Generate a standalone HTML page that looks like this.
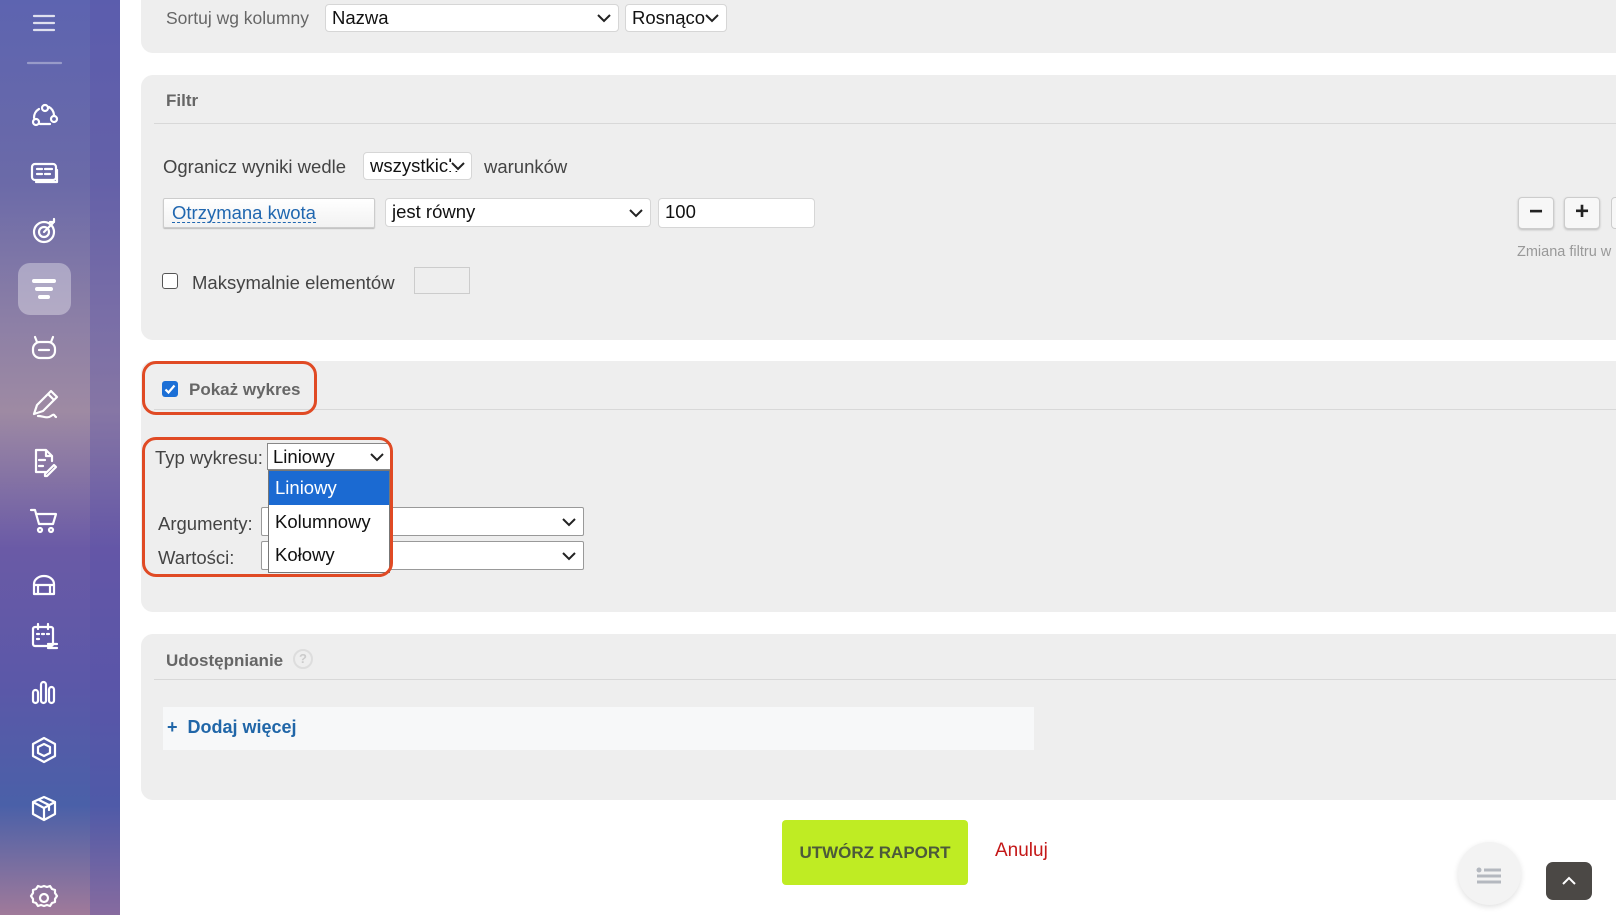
<!DOCTYPE html>
<html><head><meta charset="utf-8"><style>
*{box-sizing:border-box;margin:0;padding:0}
body{width:1616px;height:915px;overflow:hidden;background:#fff;font-family:"Liberation Sans","DejaVu Sans",sans-serif;color:#333;position:relative}
.sb{position:absolute;left:0;top:0;width:120px;height:915px;background:linear-gradient(180deg,#5d64b0 0%,#6b6aa8 20%,#8c7fa6 35%,#9e8aa3 45%,#6a5aa6 60%,#5b58a8 75%,#4a60a8 88%,#a07a9a 100%)}
.sb2{position:absolute;left:90px;top:0;width:30px;height:915px;background:rgba(90,80,170,.35)}
.t{position:absolute;font-size:18.5px;white-space:nowrap}
.sel{position:absolute;background:#fff;border:1px solid #d6d6d6;border-radius:4px;font-size:18.5px;color:#111;padding:2px 6px;white-space:nowrap}
.sel svg{position:absolute;right:7px;top:50%;margin-top:-4px}
.red{position:absolute;border:3px solid #e04a24;border-radius:14px}
.hr{position:absolute;height:1px;background:#d8d8d8}
.panel{position:absolute;left:141px;width:1500px;background:#eee;border-radius:12px}
</style></head><body>
<div class="sb"></div><div class="sb2"></div>
<svg style="position:absolute;left:0;top:0" width="120" height="915" fill="none" stroke="#fff" stroke-width="2.2" stroke-linecap="round" stroke-linejoin="round">
<path d="M34 16h20M34 23h20M34 30h20" stroke-opacity=".8"/>
<path d="M28 63h33" stroke-opacity=".35"/>
<circle cx="45" cy="108" r="3"/><circle cx="36" cy="122" r="3"/><circle cx="54" cy="119" r="3"/><path d="M39 109a10 10 0 0 0-5 9M49 107a10 10 0 0 1 5 8M40 124h10"/>
<rect x="32" y="164" width="24" height="16" rx="3"/><path d="M36 182h21v-12M37 169h5M37 174h5M45 169h7M45 174h5"/>
<circle cx="44" cy="232" r="10"/><circle cx="44" cy="232" r="5"/><path d="M44 232l9-9M50 222h4v-3"/>
<rect x="18" y="263" width="53" height="52" rx="12" fill="#fff" fill-opacity=".35" stroke="none"/>
<path d="M34 281h20M37 289h14M40 297h8" stroke-width="4"/>
<rect x="33" y="342" width="22" height="16" rx="7"/><path d="M37 342l-2-5M51 342l2-5M39 350h10"/>
<path d="M34 414l3-9 14-14 6 6-14 14zM48 394l6 6M38 416c5 0 9 3 13 0s3 0 5 1"/>
<path d="M47 472h-11v-22h10l6 6v5M46 450v6h6M39 460h6M39 466h4M45 474l9-9 2 2-9 9h-2z"/>
<path d="M31 510h4l4 14h14l3-10H36"/><circle cx="40" cy="530" r="2"/><circle cx="51" cy="530" r="2"/>
<path d="M34 594v-10a10 8 0 0 1 20 0v10zM34 585h20M38 585v9M50 585v9"/>
<rect x="33" y="627" width="20" height="19" rx="2"/><path d="M38 624v5M48 624v5M37 634h2M42 634h2M47 634h2M37 639h2M48 644h9M48 648h9"/>
<rect x="33" y="690" width="5" height="13" rx="2.5"/><rect x="41" y="682" width="5" height="21" rx="2.5"/><rect x="49" y="687" width="5" height="16" rx="2.5"/>
<path d="M44 738l11 6v12l-11 6-11-6v-12z"/><path d="M44 744l6 3v6l-6 3-6-3v-6z"/>
<path d="M44 797l11 5v12l-11 6-11-6v-12zM33 802l11 6 11-6M44 808v12M39 800l10 5v5"/>
<circle cx="44" cy="898" r="4"/><path d="M44 886l3 1 3-1 2 3 3 1 0 3 2 3-2 3 0 3-3 1-2 3-3-1-3 1-3-1-3 1-2-3-3-1 0-3-2-3 2-3 0-3 3-1 2-3 3 1z"/>
</svg>

<div class="panel" style="top:-20px;height:73px"></div>
<div class="t" style="left:166px;top:8px;color:#666;font-size:17.5px">Sortuj wg kolumny</div>
<div class="sel" style="left:325px;top:4px;width:294px;height:28px">Nazwa<svg width="14" height="9"><path d="M1 1l6 6 6-6" stroke="#222" stroke-width="2" fill="none"/></svg></div>
<div class="sel" style="left:625px;top:4px;width:102px;height:28px">Rosnąco<svg width="14" height="9" style="background:#fff"><path d="M1 1l6 6 6-6" stroke="#222" stroke-width="2" fill="none"/></svg></div>

<div class="panel" style="top:75px;height:265px"></div>
<div class="t" style="left:166px;top:91px;color:#666;font-weight:bold;font-size:17px">Filtr</div>
<div class="hr" style="left:154px;top:123px;width:1470px"></div>
<div class="t" style="left:163px;top:156px;color:#444">Ogranicz wyniki wedle</div>
<div class="sel" style="left:363px;top:152px;width:109px;height:28px;overflow:hidden">wszystkich<svg width="18" height="9" style="background:#fff;right:4px"><path d="M3 1l6 6 6-6" stroke="#222" stroke-width="2" fill="none"/></svg></div>
<div class="t" style="left:484px;top:156px;color:#444">warunków</div>
<div style="position:absolute;left:163px;top:198px;width:212px;height:30px;background:linear-gradient(#fff,#f2f2f2);border:1px solid #ccc;border-radius:2px;box-shadow:0 1px 1px #bbb"></div>
<div class="t" style="left:172px;top:203px;color:#2067b0;border-bottom:1px dashed #2067b0;line-height:19px">Otrzymana kwota</div>
<div class="sel" style="left:385px;top:198px;width:266px;height:29px">jest równy<svg width="14" height="9"><path d="M1 1l6 6 6-6" stroke="#222" stroke-width="2" fill="none"/></svg></div>
<div class="sel" style="left:658px;top:198px;width:157px;height:30px">100</div>
<div style="position:absolute;left:1518px;top:197px;width:36px;height:32px;background:#f7f7f7;border:1px solid #ccc;border-radius:4px;box-shadow:0 1px 2px #bbb;font-size:24px;text-align:center;line-height:28px;font-weight:bold;color:#222">−</div>
<div style="position:absolute;left:1564px;top:197px;width:36px;height:32px;background:#f7f7f7;border:1px solid #ccc;border-radius:4px;box-shadow:0 1px 2px #bbb;font-size:24px;text-align:center;line-height:28px;font-weight:bold;color:#222">+</div>
<div style="position:absolute;left:1611px;top:197px;width:36px;height:32px;background:#f7f7f7;border:1px solid #ccc;border-radius:4px"></div>
<div class="t" style="left:1517px;top:244px;color:#999;font-size:14.5px">Zmiana filtru w</div>
<div style="position:absolute;left:162px;top:273px;width:16px;height:16px;border:1.5px solid #555;border-radius:3px;background:#fff"></div>
<div class="t" style="left:192px;top:272px;color:#444">Maksymalnie elementów</div>
<div style="position:absolute;left:414px;top:267px;width:56px;height:27px;border:1px solid #ccc;background:#eee"></div>

<div class="panel" style="top:361px;height:251px"></div>
<div class="hr" style="left:154px;top:409px;width:1470px"></div>
<div style="position:absolute;left:162px;top:381px;width:16px;height:16px;background:#1b6fd6;border-radius:3px"><svg width="16" height="16"><path d="M3.5 8.5l3 3 6-7" stroke="#fff" stroke-width="2.2" fill="none"/></svg></div>
<div class="t" style="left:189px;top:380px;color:#666;font-weight:bold;font-size:17px">Pokaż wykres</div>
<div class="red" style="left:142px;top:361px;width:175px;height:54px"></div>

<div class="t" style="left:155px;top:447px;color:#444">Typ wykresu:</div>
<div style="position:absolute;left:267px;top:443px;width:124px;height:27px;background:#fff;border:1px solid #888;font-size:18.5px;padding:2px 5px;color:#111">Liniowy<svg width="14" height="9" style="position:absolute;right:6px;top:9px"><path d="M1 1l6 6 6-6" stroke="#222" stroke-width="2" fill="none"/></svg></div>
<div class="t" style="left:158px;top:513px;color:#444">Argumenty:</div>
<div class="sel" style="left:261px;top:507px;width:323px;height:29px;border-radius:2px;border-color:#999"><svg width="14" height="9"><path d="M1 1l6 6 6-6" stroke="#222" stroke-width="2" fill="none"/></svg></div>
<div class="t" style="left:158px;top:547px;color:#444">Wartości:</div>
<div class="sel" style="left:261px;top:541px;width:323px;height:29px;border-radius:2px;border-color:#999"><svg width="14" height="9"><path d="M1 1l6 6 6-6" stroke="#222" stroke-width="2" fill="none"/></svg></div>
<div style="position:absolute;left:268px;top:470px;width:122px;height:103px;background:#fff;border:1px solid #777;font-size:18.5px;color:#111">
<div style="height:34px;background:#1b6ad2;color:#fff;padding:6px 6px">Liniowy</div>
<div style="height:34px;padding:6px 6px">Kolumnowy</div>
<div style="height:34px;padding:5px 6px">Kołowy</div>
</div>
<div class="red" style="left:142px;top:437px;width:251px;height:140px"></div>

<div class="panel" style="top:634px;height:166px"></div>
<div class="t" style="left:166px;top:651px;color:#666;font-weight:bold;font-size:17px">Udostępnianie</div>
<div style="position:absolute;left:293px;top:649px;width:20px;height:20px;border-radius:50%;border:2px solid #ddd;color:#ccc;font-size:13px;font-weight:bold;text-align:center;line-height:16px">?</div>
<div class="hr" style="left:154px;top:679px;width:1470px"></div>
<div style="position:absolute;left:163px;top:707px;width:871px;height:43px;background:#f7f8f9"></div>
<div class="t" style="left:167px;top:717px;color:#2066a8;font-weight:bold;font-size:18px">+&nbsp; Dodaj więcej</div>

<div style="position:absolute;left:782px;top:820px;width:186px;height:65px;background:#bfec23;border-radius:4px;color:#4c5a3a;font-size:17px;font-weight:bold;text-align:center;line-height:65px">UTWÓRZ RAPORT</div>
<div class="t" style="left:995px;top:840px;color:#c41818;font-size:19px">Anuluj</div>
<div style="position:absolute;left:1458px;top:842px;width:63px;height:63px;border-radius:50%;background:#f3f3f3;box-shadow:0 2px 6px rgba(0,0,0,.12)"><svg width="63" height="63" style="position:absolute;left:0;top:0"><circle cx="21" cy="28" r="2.5" fill="#b4b8bf"/><path d="M26 28h17M19 34h24M19 40h24" stroke="#b4b8bf" stroke-width="3"/></svg></div>
<div style="position:absolute;left:1546px;top:862px;width:46px;height:38px;border-radius:7px;background:#4b4845"><svg width="46" height="38"><path d="M17 22l6-6 6 6" stroke="#fff" stroke-width="2" fill="none"/></svg></div>
</body></html>
